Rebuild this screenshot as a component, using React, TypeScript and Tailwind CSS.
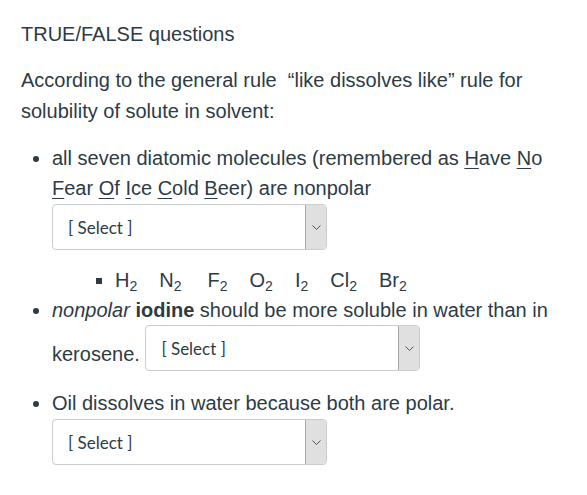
import type { ReactNode } from "react";

function SelectBox({ className = "" }: { className?: string }) {
  return (
    <span
      className={`inline-flex h-[46px] w-[275px] overflow-hidden rounded-[4px] border border-[#c7cdd1] bg-white ${className}`}
    >
      <span className="flex flex-1 items-center pl-[15px] font-['Lato',sans-serif] text-[17px] leading-none text-[#2d3b45]">
        [ Select ]
      </span>
      <span className="flex w-[21px] items-center justify-center rounded-r-[3px] border-l border-[#a9a9a9] bg-[#e0e0e0]">
        <svg width="9" height="5" viewBox="0 0 9 5" aria-hidden="true">
          <path d="M0.5 0.5 L4.5 4.5 L8.5 0.5" fill="none" stroke="#555" strokeWidth="1" />
        </svg>
      </span>
    </span>
  );
}

function U({ children }: { children: ReactNode }) {
  return <span className="underline decoration-1 underline-offset-[3px]">{children}</span>;
}

function Mol({ sym, className = "" }: { sym: string; className?: string }) {
  return (
    <span className={className}>
      {sym}
      <sub className="text-[14px] leading-none">2</sub>
    </span>
  );
}

export default function App() {
  return (
    <div className="min-h-[495px] bg-white pl-[21px] pr-[30px] pt-[19px] font-['Liberation_Sans',Arial,sans-serif] text-[20px] leading-[30px] text-[#2d3b45]">
      <p>TRUE/FALSE questions</p>
      <p className="mt-[16px] leading-[31px]">
        According to the general rule&nbsp; “like dissolves like” rule for solubility of solute in solvent:
      </p>
      <ul className="mt-[16px] list-disc pl-[31px]">
        <li>
          all seven diatomic molecules (remembered as <U>H</U>ave <U>N</U>o <U>F</U>ear <U>O</U>f{" "}
          <U>I</U>ce <U>C</U>old <U>B</U>eer) are nonpolar{" "}
          <SelectBox className="mt-[1px] align-top" />
          <ul className="mt-[15px] list-[square] pl-[63px]">
            <li>
              <span className="inline-flex gap-[22px]">
                <Mol sym="H" />
                <Mol sym="N" />
                <Mol sym="F" className="ml-[4px]" />
                <Mol sym="O" />
                <Mol sym="I" />
                <Mol sym="Cl" />
                <Mol sym="Br" />
              </span>
            </li>
          </ul>
        </li>
        <li>
          <em>nonpolar</em> <strong>iodine</strong> should be more soluble in water than in kerosene.{" "}
          <SelectBox className="align-[6px]" />
        </li>
        <li className="mt-[17px]">
          Oil dissolves in water because both are polar.{" "}
          <SelectBox className="mt-[1px] align-top" />
        </li>
      </ul>
    </div>
  );
}
